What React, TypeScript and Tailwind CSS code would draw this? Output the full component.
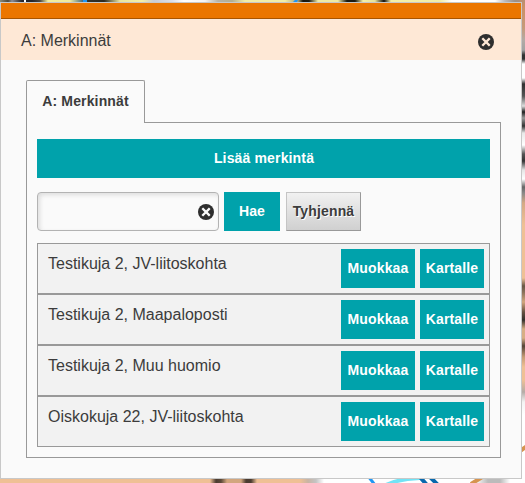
const rows = [
  'Testikuja 2, JV-liitoskohta',
  'Testikuja 2, Maapaloposti',
  'Testikuja 2, Muu huomio',
  'Oiskokuja 22, JV-liitoskohta',
];

function CloseIcon({ cross }: { cross: string }) {
  return (
    <svg width="16" height="16" viewBox="0 0 16 16" className="block">
      <circle cx="8" cy="8" r="8" fill="#2e2e2e" />
      <path d="M5.1 5.1 L10.9 10.9 M10.9 5.1 L5.1 10.9" stroke={cross} strokeWidth="2.3" strokeLinecap="square" />
    </svg>
  );
}

type Stop = [number, string];

const topStops: Stop[] = [
  [0, '#8a8a78'], [8, '#4a4a40'], [12, '#8d8d93'], [22, '#25252a'], [32, '#22252c'], [40, '#4a4740'],
  [48, '#f2ee9c'], [70, '#efeaa0'], [82, '#4f7585'], [88, '#33322a'], [104, '#2c2a20'], [120, '#e9e5a0'],
  [142, '#f4f0a8'], [154, '#c9ccd4'], [172, '#dcdfe8'], [184, '#ffffff'], [205, '#f4f4f4'], [218, '#b5b2a8'],
  [232, '#b3ae90'], [245, '#f1eda8'], [285, '#f1eda8'], [298, '#a5a27a'], [303, '#15150f'], [309, '#1c1c14'],
  [318, '#eeeaa4'], [338, '#eeeaa4'], [347, '#1a1a12'], [355, '#1a1a12'], [363, '#f4f0a8'],
  [375, '#e6e29c'], [384, '#111111'], [391, '#f4f0a8'], [440, '#f1eda8'], [452, '#ffffff'],
  [495, '#ffffff'], [505, '#b9b9bd'], [515, '#9b9088'], [525, '#b78e74'],
];

const rightStops: Stop[] = [
  [0, '#b98f72'], [8, '#cb9067'], [28, '#c59a7a'], [40, '#b3aaa5'], [50, '#a2a2a2'], [55, '#333333'],
  [59, '#333333'], [64, '#ffffff'], [78, '#ffffff'], [84, '#303030'], [96, '#555555'], [101, '#999999'],
  [106, '#dddddd'], [112, '#222222'], [118, '#999999'], [126, '#333333'], [133, '#e8e8e8'],
  [145, '#ffffff'], [154, '#555555'], [161, '#333333'], [170, '#e5e5e5'], [179, '#ffffff'],
  [187, '#666666'], [193, '#888888'], [203, '#d5a985'], [225, '#efc095'], [278, '#efc095'],
  [286, '#695746'], [292, '#88705a'], [302, '#d2a67e'], [312, '#665142'], [320, '#33302c'],
  [329, '#d7ae84'], [338, '#d7ae84'], [346, '#554538'], [357, '#c59c75'], [367, '#efc095'],
  [380, '#efc095'], [392, '#b4aba6'], [402, '#f3f3f3'], [415, '#ffffff'], [483, '#ffffff'],
];

const bottomStops: Stop[] = [
  [0, '#efc095'], [210, '#efc095'], [216, '#4a3b30'], [221, '#5a4838'], [227, '#d2a67e'], [241, '#d2a67e'],
  [246, '#4a3b30'], [251, '#4a3b30'], [257, '#efc095'], [300, '#efc095'], [308, '#c9b4a4'], [316, '#c4c4c4'],
  [324, '#ffffff'], [475, '#ffffff'], [488, '#bbbbbb'], [500, '#bbbbbb'], [510, '#ffffff'], [525, '#ffffff'],
];

function stops(list: Stop[], length: number) {
  return list.map(([at, color]) => <stop key={at} offset={at / length} stopColor={color} />);
}

function MapBackdrop() {
  return (
    <svg className="absolute inset-0" width="525" height="483" viewBox="0 0 525 483">
      <defs>
        <linearGradient id="top">{stops(topStops, 525)}</linearGradient>
        <linearGradient id="right" x1="0" y1="0" x2="0" y2="1">{stops(rightStops, 483)}</linearGradient>
        <linearGradient id="bottom">{stops(bottomStops, 525)}</linearGradient>
      </defs>
      <rect width="525" height="4" fill="url(#top)" />
      <rect x="520" width="5" height="483" fill="url(#right)" />
      <rect y="477" width="525" height="6" fill="url(#bottom)" />
      <path d="M24 0h2v2h-2z" fill="#fff" />
      <path d="M83 0h4v2h-4zM293 2l2-2h3l-1 2z" fill="#2196f3" />
      <path d="M368 476 L375 485" stroke="#2196f3" strokeWidth="3" />
      <path d="M386 485 Q398 479 420 478" stroke="#72e3f5" strokeWidth="4" fill="none" />
      <path d="M419 476 L427 485 M429 476 L438 485" stroke="#0868ad" strokeWidth="4" />
      <path d="M471 484 L484 476 M520 451 L527 446" stroke="#d69450" strokeWidth="4" />
    </svg>
  );
}

const teal = 'bg-[#00a2ab] text-white font-bold text-sm leading-[39px] h-[39px] text-center whitespace-nowrap tracking-[0.15px]';

export default function App() {
  return (
    <div className="relative h-[483px] w-[525px] overflow-hidden pt-[2px] font-['Liberation_Sans',Arial,sans-serif] text-[#3c3c3c]">
      <MapBackdrop />
      <div className="relative h-[477px] w-[522px] border border-[#c8c8c8] bg-[#fafafa]">
        <div className="h-4 border-b border-[#a95500] bg-[#eb7600]" />
        <header className="flex h-[41px] items-start justify-between bg-[#fee8d6] pl-5 pr-[27px]">
          <h1 className="pt-[10px] text-base leading-6">A: Merkinnät</h1>
          <button aria-label="Sulje" className="mt-[15px]">
            <CloseIcon cross="#fee8d6" />
          </button>
        </header>
        <main className="pl-[25px] pr-5 pt-5">
          <div className="relative z-10 -mb-px h-[43px] w-[119px] rounded-t-[2px] border border-b-0 border-[#999] bg-[#fafafa] text-center text-sm font-bold leading-[41px] tracking-[0.15px]">
            A: Merkinnät
          </div>
          <section className="h-[336px] w-[475px] border border-[#999] px-[10px] pt-4">
            <button className={`${teal} block w-full pl-px`}>Lisää merkintä</button>
            <div className="mt-[14px] flex">
              <div className="flex h-[39px] w-[182px] items-center rounded border border-[#b3b3b3] pr-1 shadow-[inset_2px_2px_4px_#ddd]">
                <input aria-label="Haku" className="min-w-0 flex-1 bg-transparent px-2 outline-none" />
                <CloseIcon cross="#fafafa" />
              </div>
              <button className={`${teal} ml-[5px] w-14`}>Hae</button>
              <button className="ml-1.5 h-[39px] w-[75px] whitespace-nowrap border border-t-[#c4c4c4] border-l-[#c4c4c4] border-r-[#999] border-b-[#999] bg-linear-to-b from-[#f1f1f1] to-[#d0d0d0] text-center text-sm font-bold leading-[37px] tracking-[0.15px] [text-shadow:1px_1px_0_#fff]">
                Tyhjennä
              </button>
            </div>
            <ul className="mt-3">
              {rows.map((row) => (
                <li key={row} className="flex h-[51px] border border-[#999] bg-[#f2f2f2] pl-[10px] pr-[5px]">
                  <span className="flex-1 pt-2 text-base leading-6">{row}</span>
                  <div className="flex gap-[5px] pt-[5px]">
                    <button className={`${teal} w-[74px]`}>Muokkaa</button>
                    <button className={`${teal} w-16`}>Kartalle</button>
                  </div>
                </li>
              ))}
            </ul>
          </section>
        </main>
      </div>
    </div>
  );
}
